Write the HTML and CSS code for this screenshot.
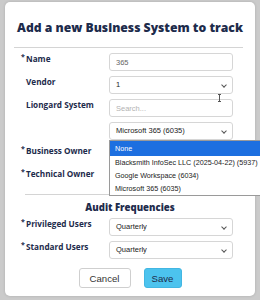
FILE: index.html
```html
<!DOCTYPE html>
<html lang="en">
<head>
    <meta charset="UTF-8">
    <meta name="viewport" content="width=device-width, initial-scale=1.0">
    <title>Add Business System</title>
    <link rel="stylesheet" href="styles.css">
</head>
<body>
    <div class="backdrop">
        <div class="modal">
            <h2 class="modal-title">Add a new Business System to track</h2>
            <hr class="rule">
            <div class="form-grid">
                <label class="lbl req">Name</label>
                <div class="field"><input class="inp" type="text" value="365"></div>

                <label class="lbl">Vendor</label>
                <div class="field"><div class="sel">1</div></div>

                <label class="lbl">Liongard System</label>
                <div class="field stack">
                    <input class="inp" type="text" placeholder="Search...">
                    <div class="sel open">Microsoft 365 (6035)
                        <ul class="dropdown">
                            <li class="active">None</li>
                            <li>Blacksmith InfoSec LLC (2025-04-22) (5937)</li>
                            <li>Google Workspace (6034)</li>
                            <li>Microsoft 365 (6035)</li>
                        </ul>
                    </div>
                </div>

                <label class="lbl req">Business Owner</label>
                <div class="field"><div class="sel"></div></div>

                <label class="lbl req">Technical Owner</label>
                <div class="field"><div class="sel"></div></div>
            </div>

            <hr class="rule short">
            <h3 class="section-title">Audit Frequencies</h3>

            <div class="form-grid">
                <label class="lbl req">Privileged Users</label>
                <div class="field"><div class="sel">Quarterly</div></div>

                <label class="lbl req">Standard Users</label>
                <div class="field"><div class="sel">Quarterly</div></div>
            </div>

            <div class="actions">
                <button class="btn cancel" type="button">Cancel</button>
                <button class="btn save" type="button">Save</button>
            </div>
        </div>
        <span class="ibeam"></span>
    </div>
</body>
</html>
```

FILE: styles.css
```css
*{
    box-sizing: border-box;
}

body{
    margin: 0;
    width: 260px;
    height: 300px;
    overflow: hidden;
    background-color: #cbcbcb;
    font-family: "Open Sans", sans-serif;
}

.backdrop{
    position: relative;
    height: 300px;
    padding: 2px 5px 0 5px;
}

.modal{
    width: 250px;
    height: 294px;
    background-color: white;
    border-radius: 5px;
    box-shadow: 0 0 3px rgba(0,0,0,0.15);
    padding-top: 17px;
}

.modal-title{
    margin: 0;
    text-align: center;
    white-space: nowrap;
    font-size: 12.2px;
    font-weight: 800;
    color: #1d2b4b;
    line-height: 18px;
}

.rule{
    border: none;
    border-top: 1px solid #d4d4d4;
    margin: 10px 12px 5px 9px;
}

.rule.short{
    margin: 8px 16px 0 20px;
}

.form-grid{
    display: grid;
    grid-template-columns: 104px 124px;
    row-gap: 5px;
}

.lbl{
    font-size: 8.2px;
    font-weight: 700;
    color: #1d2b4b;
    line-height: 11px;
    padding: 0 0 0 21px;
    position: relative;
}

.lbl.req::before{
    content: "*";
    position: absolute;
    left: 16px;
    top: -2px;
    font-size: 7px;
}

.field{
    position: relative;
}

.field.stack{
    display: flex;
    flex-direction: column;
    gap: 5px;
}

.inp, .sel{
    display: block;
    width: 124px;
    height: 18px;
    border: 1px solid #d6d6d6;
    border-radius: 3px;
    font-family: "Liberation Sans", Arial, sans-serif;
    font-size: 7.5px;
    color: #333;
    padding: 0 6px;
    background: white;
    line-height: 16px;
}

.inp{
    color: #666;
}

.inp::placeholder{
    color: #b3b3b3;
}

.sel{
    position: relative;
    color: #222;
}

.sel::after{
    content: "";
    position: absolute;
    right: 6px;
    top: 6px;
    width: 3px;
    height: 3px;
    border-right: 1px solid #555;
    border-bottom: 1px solid #555;
    transform: rotate(45deg);
}

.dropdown{
    position: absolute;
    left: -1px;
    top: 17px;
    width: 153px;
    margin: 0;
    padding: 0;
    list-style: none;
    background: white;
    border: 1px solid #9a9a9a;
    z-index: 5;
    font-size: 7.2px;
}

.dropdown li{
    height: 13px;
    line-height: 13px;
    padding-left: 5px;
    white-space: nowrap;
    color: #222;
}

.dropdown li.active{
    background-color: #1d6fe0;
    color: white;
    height: 15px;
    line-height: 15px;
}

.section-title{
    margin: 6px 0 3px 0;
    text-align: center;
    font-size: 9.6px;
    line-height: 14px;
    font-weight: 800;
    color: #1d2b4b;
}

.actions{
    display: flex;
    justify-content: center;
    gap: 13px;
    margin-top: 9px;
}

.btn{
    height: 20px;
    border-radius: 3px;
    font-family: "Liberation Sans", Arial, sans-serif;
    font-size: 9.6px;
    cursor: pointer;
    padding: 0;
}

.cancel{
    width: 52px;
    background: white;
    border: 1px solid #cfcfcf;
    color: #333;
}

.save{
    width: 38px;
    background-color: #4cc3ee;
    border: 1px solid #42b6e2;
    color: #1d2b4b;
}

.ibeam{
    position: absolute;
    left: 219px;
    top: 94px;
    width: 1px;
    height: 8px;
    background: #555;
}

.ibeam::before, .ibeam::after{
    content: "";
    position: absolute;
    left: -1px;
    width: 3px;
    height: 1px;
    background: #555;
}

.ibeam::before{
    top: 0;
}

.ibeam::after{
    bottom: 0;
}
```
